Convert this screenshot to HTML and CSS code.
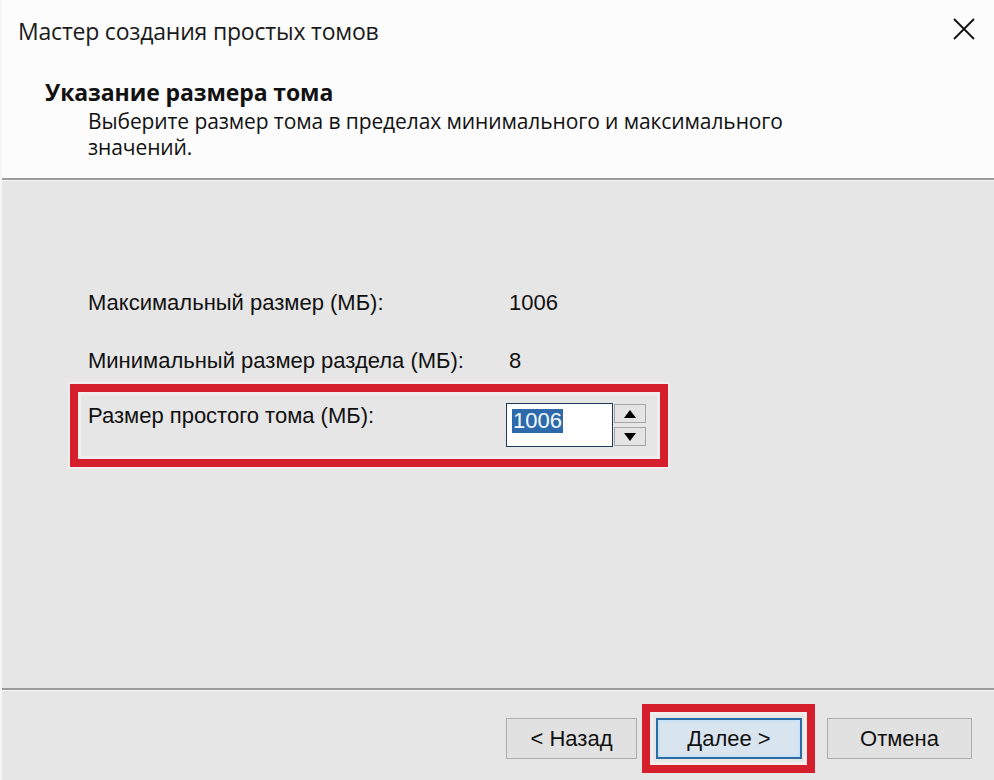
FILE: index.html
```html
<!DOCTYPE html>
<html lang="ru">
<head>
<meta charset="utf-8">
<title>Мастер создания простых томов</title>
<link rel="stylesheet" href="styles.css">
</head>
<body>
<div class="dialog">
  <div class="header">
    <div class="titlebar">
      <span class="title">Мастер создания простых томов</span>
      <svg class="close" width="24" height="24" viewBox="0 0 24 24"><path d="M2 2L22 22M22 2L2 22" stroke="#111" stroke-width="1.8" fill="none"/></svg>
    </div>
    <div class="head-title">Указание размера тома</div>
    <div class="head-sub">Выберите размер тома в пределах минимального и максимального значений.</div>
  </div>
  <div class="sep"></div>
  <div class="content">
    <div class="row row-1">
      <span class="label">Максимальный размер (МБ):</span>
      <span class="value">1006</span>
    </div>
    <div class="row row-2">
      <span class="label">Минимальный размер раздела (МБ):</span>
      <span class="value">8</span>
    </div>
    <div class="row row-mark">
      <span class="label">Размер простого тома (МБ):</span>
      <div class="spin">
        <div class="spin-input"><span class="sel">1006</span></div>
        <div class="spin-btns">
          <div class="spin-btn"><svg width="12" height="8" viewBox="0 0 12 8"><path d="M6 0L12 8H0Z" fill="#000"/></svg></div>
          <div class="spin-btn"><svg width="12" height="8" viewBox="0 0 12 8"><path d="M0 0H12L6 8Z" fill="#000"/></svg></div>
        </div>
      </div>
    </div>
  </div>
  <div class="sep"></div>
  <div class="footer">
    <button class="btn btn-back">&lt; Назад</button>
    <div class="mark-btn"><button class="btn btn-next">Далее &gt;</button></div>
    <button class="btn btn-cancel">Отмена</button>
  </div>
</div>
</body>
</html>
```
FILE: styles.css
```css
html, body {
  margin: 0;
  padding: 0;
}
body {
  width: 994px;
  height: 780px;
  overflow: hidden;
  background: #e6e6e6;
  font-family: "Liberation Sans", Arial, sans-serif;
  color: #111;
}
.dialog {
  display: flex;
  flex-direction: column;
  height: 780px;
  border-left: 2px solid #f6f6f6;
  box-sizing: border-box;
}
.header {
  background: #fcfcfc;
  height: 178px;
  box-sizing: border-box;
  padding: 0 0 0 16px;
}
.titlebar {
  display: flex;
  align-items: center;
  justify-content: space-between;
  height: 62px;
  padding-right: 18px;
}
.title {
  font-family: "Open Sans", sans-serif;
  font-size: 23px;
  letter-spacing: -0.2px;
  color: #1a1a1a;
}
.close {
  display: block;
  margin-top: -4px;
}
.head-title {
  font-family: "Open Sans", sans-serif;
  font-weight: bold;
  font-size: 23px;
  letter-spacing: -0.1px;
  margin: 16px 0 0 27px;
  line-height: 28px;
}
.head-sub {
  font-family: "Open Sans", sans-serif;
  font-size: 21px;
  letter-spacing: -0.1px;
  line-height: 26px;
  margin: 2px 0 0 70px;
  width: 720px;
}
.sep {
  height: 2px;
  background: #9c9c9c;
  border-bottom: 1px solid #f8f8f8;
}
.content {
  flex: 1;
  padding: 109px 0 0 86px;
}
.row {
  display: grid;
  grid-template-columns: 421px auto;
  align-items: start;
  font-size: 22px;
  line-height: 26px;
}
.row-1 {
  margin-bottom: 32px;
}
.row-2 {
  margin-bottom: 10px;
}
.row-mark {
  margin-left: -18px;
  width: 556px;
  border: 8px solid #d51f2d;
  padding: 11px 16px 12px 10px;
  grid-template-columns: 418px auto;
  box-shadow: inset 0 0 0 3px #f2ecec, 0 0 0 2px #f2ecec;
  box-sizing: content-box;
}
.spin {
  display: flex;
  align-items: center;
}
.spin-input {
  width: 107px;
  height: 44px;
  border: 1px solid #1f3a55;
  background: #fff;
  display: flex;
  align-items: flex-start;
  padding: 5px 0 0 5px;
  box-sizing: border-box;
}
.sel {
  background: #2d6aab;
  color: #f4fbff;
  font-size: 22px;
  line-height: 24px;
  padding: 0 1px;
}
.spin-btns {
  display: flex;
  flex-direction: column;
  gap: 4px;
  margin-left: 1px;
}
.spin-btn {
  width: 30px;
  height: 17px;
  background: #e4e4e4;
  border: 1px solid #a5a5a5;
  display: flex;
  align-items: center;
  justify-content: center;
}
.footer {
  height: 89px;
  display: flex;
  align-items: flex-start;
  padding: 13px 22px 0 0;
  justify-content: flex-end;
  box-sizing: border-box;
}
.btn {
  font-family: "Liberation Sans", Arial, sans-serif;
  font-size: 22px;
  color: #111;
  background: #e1e1e1;
  border: 1px solid #adadad;
  height: 41px;
  padding: 0;
  margin-top: 14px;
}
.btn-back {
  width: 131px;
}
.mark-btn {
  border: 8px solid #d51f2d;
  padding: 6px 5px 6px 6px;
  margin-left: 5px;
  box-shadow: inset 0 0 0 3px #f2ecec;
}
.btn-next {
  width: 146px;
  margin-top: 0;
  display: block;
  border: 2px solid #2b6ca3;
  background: #d8e4ee;
  box-shadow: inset 0 0 0 2px #c8e2f8;
}
.btn-cancel {
  width: 145px;
  margin-left: 12px;
}
```
